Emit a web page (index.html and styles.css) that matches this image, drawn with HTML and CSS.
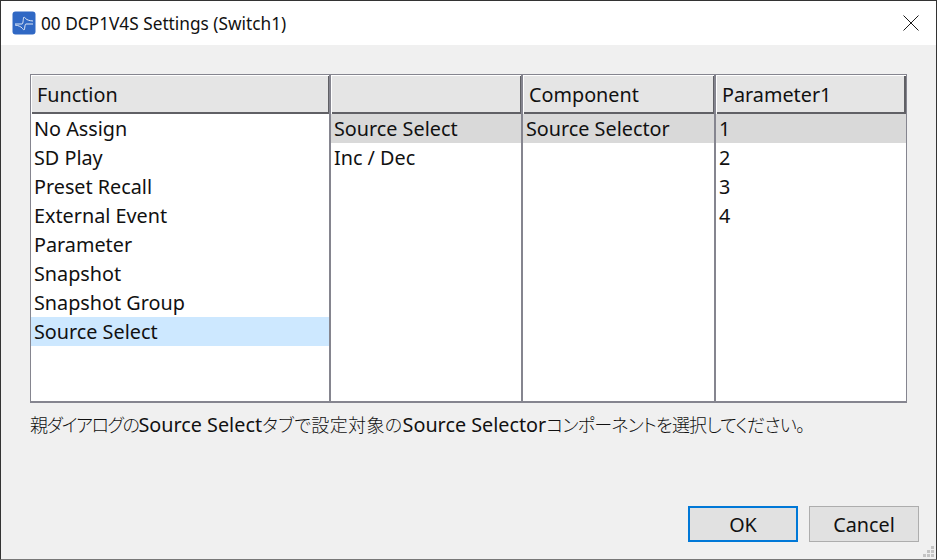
FILE: index.html
```html
<!DOCTYPE html>
<html lang="ja">
<head>
<meta charset="utf-8">
<title>00 DCP1V4S Settings (Switch1)</title>
<link rel="stylesheet" href="styles.css">
</head>
<body>
<div class="window">
  <header class="titlebar">
    <div class="title-left">
      <svg class="app-icon" width="24" height="24" viewBox="0 0 24 24">
        <rect x="0.5" y="0.5" width="23" height="23" rx="3" fill="#3068c4"/>
        <path d="M3 13H10C11.5 13 11 6 12 6C13 6 13 9.5 21 10M21 13H14C12.5 13 13 19 12 19C11 19 10.5 15 3 14" fill="none" stroke="#dfe8f6" stroke-width="1"/>
      </svg>
      <span class="title">00 DCP1V4S Settings (Switch1)</span>
    </div>
    <svg class="close" width="16" height="16" viewBox="0 0 16 16"><path d="M0.5 0.5L15.5 15.5M15.5 0.5L0.5 15.5" stroke="#1a1a1a" stroke-width="1" fill="none"/></svg>
  </header>
  <main class="content">
    <div class="table">
      <section class="col col-1">
        <div class="head">Function</div>
        <ul class="list">
          <li>No Assign</li><li>SD Play</li><li>Preset Recall</li><li>External Event</li><li>Parameter</li><li>Snapshot</li><li>Snapshot Group</li><li class="active">Source Select</li>
        </ul>
      </section>
      <section class="col">
        <div class="head">&nbsp;</div>
        <ul class="list"><li class="current">Source Select</li><li>Inc / Dec</li></ul>
      </section>
      <section class="col">
        <div class="head">Component</div>
        <ul class="list"><li class="current">Source Selector</li></ul>
      </section>
      <section class="col col-4">
        <div class="head">Parameter1</div>
        <ul class="list"><li class="current">1</li><li>2</li><li>3</li><li>4</li></ul>
      </section>
    </div>
    <p class="hint"><span class="seg-a">親ダイアログの</span><span class="latin">Source Select</span><span class="seg-b">タブで設定対象の</span><span class="latin">Source Selector</span><span class="seg-c">コンポーネントを選択してください。</span></p>
    <div class="buttons">
      <button class="btn btn-default">OK</button>
      <button class="btn">Cancel</button>
    </div>
    <svg class="grip" width="11" height="11" viewBox="0 0 11 11" fill="#c4c4c4"><rect x="8" y="0" width="3" height="3"/><rect x="4" y="4" width="3" height="3"/><rect x="8" y="4" width="3" height="3"/><rect x="0" y="8" width="3" height="3"/><rect x="4" y="8" width="3" height="3"/><rect x="8" y="8" width="3" height="3"/></svg>
  </main>
</div>
</body>
</html>
```
FILE: styles.css
```css
* { box-sizing: border-box; }
html, body { margin: 0; padding: 0; }
body {
  width: 937px;
  height: 560px;
  overflow: hidden;
  font-family: "Noto Sans", "Noto Sans CJK JP", sans-serif;
  color: #111;
}
.window {
  width: 937px;
  height: 560px;
  display: flex;
  flex-direction: column;
  border: 1px solid #333;
  border-bottom-color: #777;
  background: #f0f0f0;
}
.titlebar {
  height: 44px;
  flex: none;
  background: #fff;
  display: flex;
  align-items: center;
  justify-content: space-between;
  padding: 0 17px 0 11px;
}
.title-left { display: flex; align-items: center; gap: 5px; }
.app-icon { display: block; }
.title { font-size: 17.25px; line-height: 24px; padding-top: 2px; color: #111; }
.close { display: block; }
.content {
  position: relative;
  flex: 1;
  display: flex;
  flex-direction: column;
  padding: 29px 0 0 29px;
}
.table {
  display: grid;
  grid-template-columns: 301px 192px 193px 191px;
  height: 329px;
  width: 877px;
}
.col { display: flex; flex-direction: column; min-width: 0; }
.head {
  height: 40px;
  flex: none;
  background: #e5e5e5;
  border-top: 1px solid #85858f;
  border-right: 2px solid #85858f;
  box-shadow: inset 1px 1px 0 #fff, inset -1px 0 0 #606065, inset 0 -2px 0 #606065;
  padding: 0 0 0 6px;
  font-size: 19.8px;
  line-height: 39px;
}
.col-1 .head { border-left: 1px solid #85858f; }
.col-4 .head { border-right-width: 1px; box-shadow: inset 1px 1px 0 #fff, inset -2px 0 0 #606065, inset 0 -2px 0 #606065; }
.list {
  list-style: none;
  margin: 0;
  padding: 0;
  flex: 1;
  background: #fff;
  border-right: 2px solid #85858f;
  border-bottom: 2px solid #85858f;
}
.col-1 .list { border-left: 1px solid #85858f; }
.col-4 .list { border-right-width: 1px; }
.list li {
  height: 29px;
  line-height: 30px;
  font-size: 19.8px;
  padding-left: 3px;
  white-space: nowrap;
}
.list li.current { background: #d9d9d9; }
.list li.active { background: #cde8ff; }
.hint {
  margin: 8px 0 0 0;
  font-size: 18px;
  line-height: 28px;
  font-weight: 300;
  font-feature-settings: "palt";
  white-space: nowrap;
}
.seg-a { letter-spacing: -1.4px; }
.seg-b { letter-spacing: 0.38px; }
.seg-c { letter-spacing: -0.78px; }
.latin { font-size: 19.8px; font-weight: 400; font-feature-settings: normal; }
.buttons {
  margin-top: auto;
  display: flex;
  justify-content: flex-end;
  gap: 11px;
  padding: 0 17px 17px 0;
}
.btn {
  width: 110px;
  height: 36px;
  background: #e1e1e1;
  border: 1px solid #adadad;
  font: inherit;
  font-size: 19.8px;
  line-height: 34px;
  padding: 1px 0 0;
  color: #111;
}
.btn-default { border: 2px solid #0078d7; padding: 0; }
.grip { position: absolute; right: 2px; bottom: 2px; }
```
